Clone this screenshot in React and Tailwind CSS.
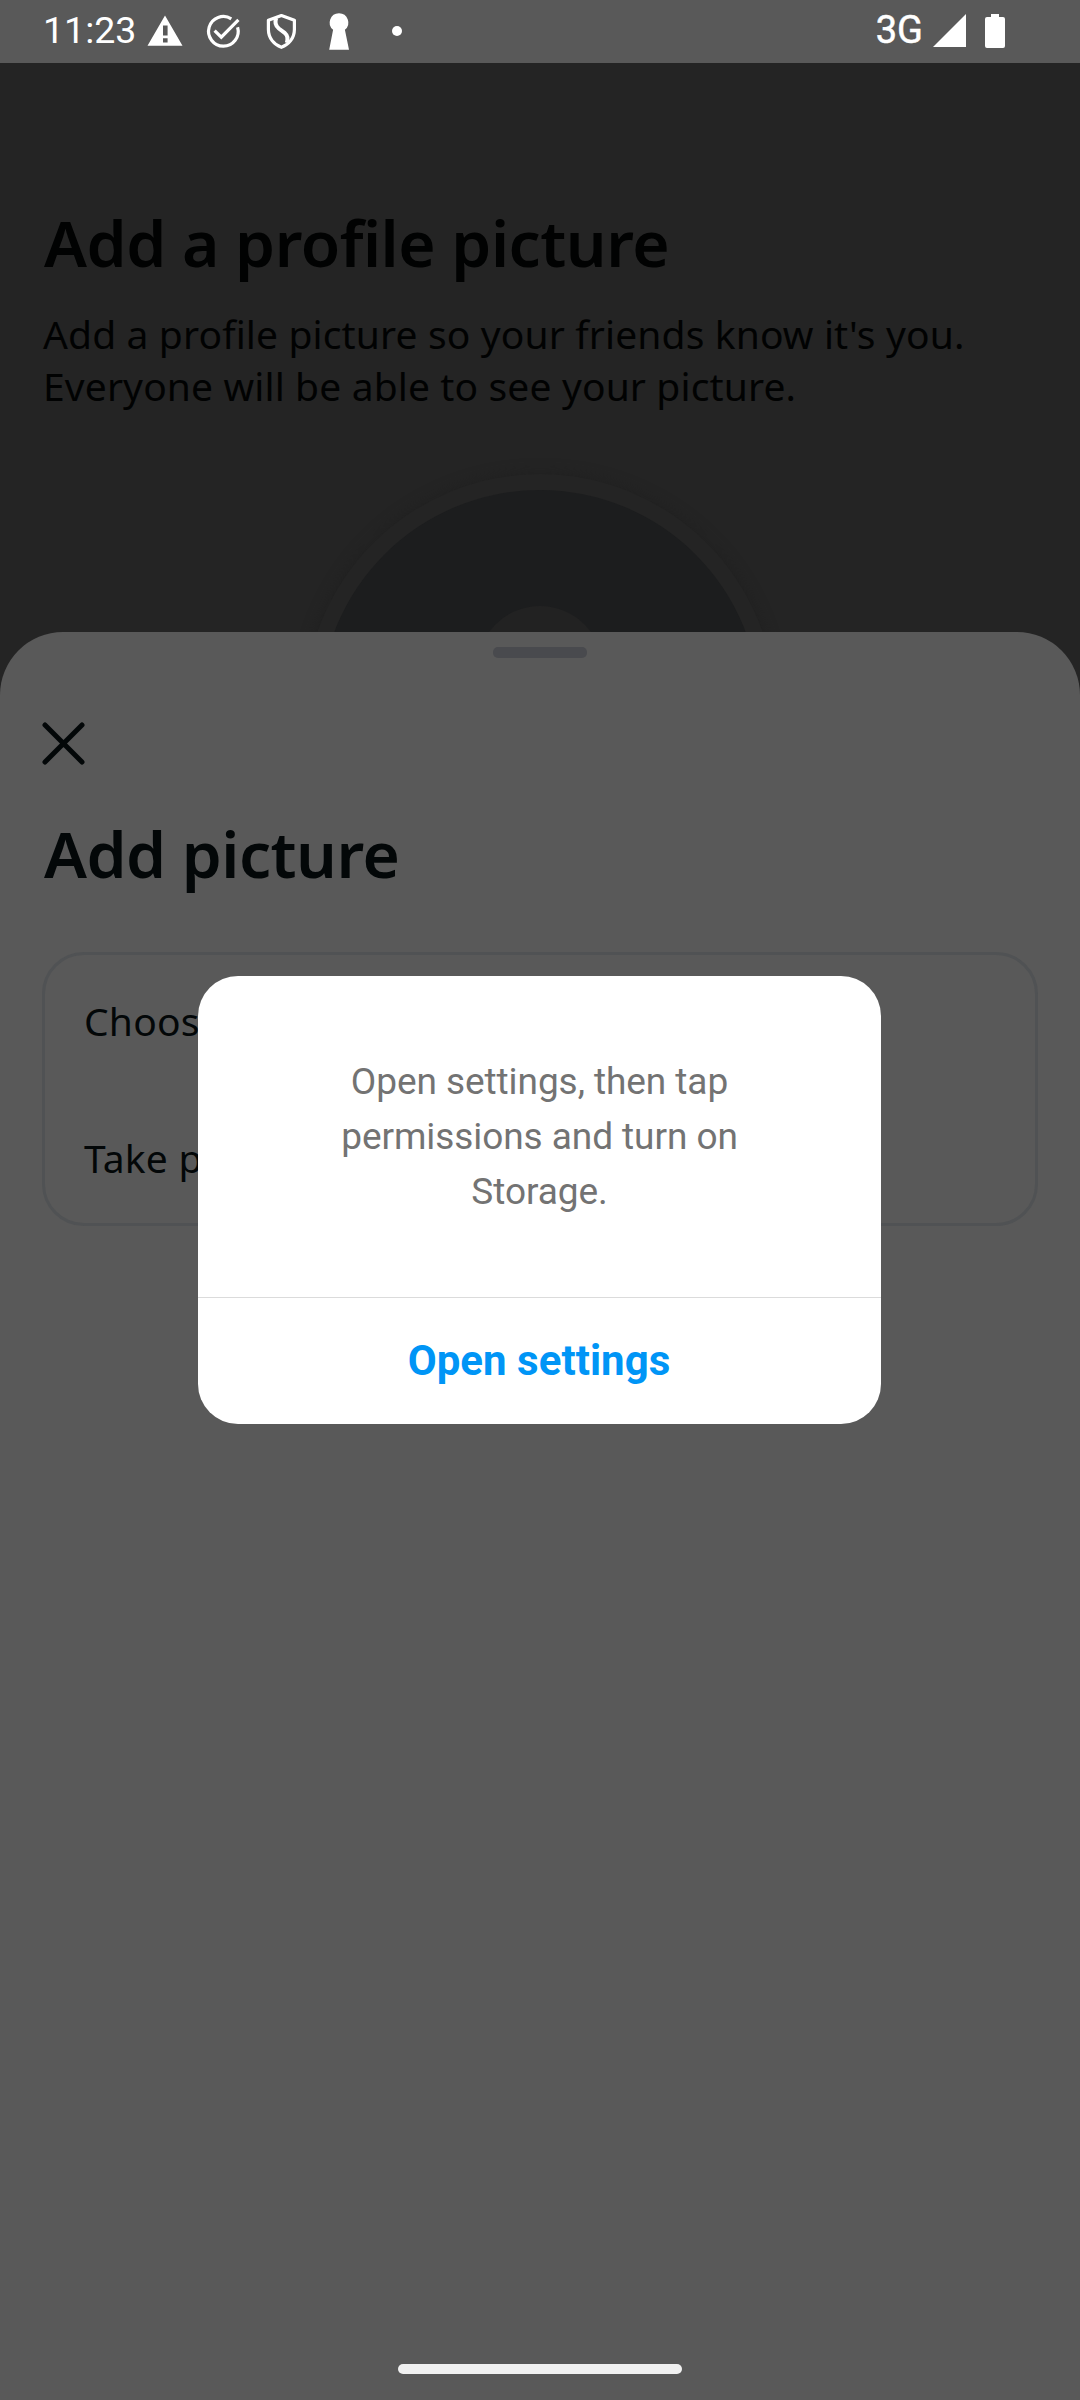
import React from 'react';

function StatusIcons() {
  return (
    <svg className="ml-[11px] h-[63px] w-[260px]" viewBox="146 0 260 63" fill="#fff">
      <path fillRule="evenodd" d="M165 15.5 182.5 45.7H147.5ZM163 25.5V35.5H167.6V25.5ZM163 38.3V42.6H167.6V38.3Z" />
      <g fill="none" stroke="#fff" strokeWidth="3.2">
        <path d="M231.3 18.8A14.8 14.8 0 1 0 237.6 27.2" />
        <path d="M214.6 30.6 221.3 37.2 238.4 19.8" />
      </g>
      <g fill="none" stroke="#fff" strokeWidth="3.2" strokeLinejoin="round">
        <path d="M281.4 15.6 294.4 20.3V29.5C294.4 38 288.8 44.7 281.4 47.3C274 44.7 268.4 38 268.4 29.5V20.3Z" />
        <path d="M276.2 18C274.6 22.4 275.4 25.8 278.8 28.5L285 33.2C287.6 35.4 288.2 38.2 286.8 42.8" strokeWidth="4" />
      </g>
      <path d="M339 13.3A9.3 9.3 0 0 1 344.9 29.8L349 49.8H329.2L333.1 29.8A9.3 9.3 0 0 1 339 13.3Z" />
      <circle cx="397" cy="31" r="5" />
    </svg>
  );
}

function SignalIcons() {
  return (
    <svg className="ml-[7px] h-[63px] w-[76px]" viewBox="930 0 76 63" fill="#fff">
      <path d="M966 14V47H933Z" />
      <path d="M991 14H999V17H1003Q1005 17 1005 19V46Q1005 48 1003 48H987Q985 48 985 46V19Q985 17 987 17H991Z" />
    </svg>
  );
}

function StatusBar() {
  return (
    <header className="flex h-[63px] items-center bg-[#595959] pr-[74px] pl-[43px] font-['Roboto',sans-serif] text-[38px] leading-[61px] text-white">
      <span className="w-[92px] pb-[2px] text-[37.5px] whitespace-nowrap">11:23</span>
      <StatusIcons />
      <span className="ml-auto pb-[2px] font-normal [-webkit-text-stroke:0.5px_white]">3G</span>
      <SignalIcons />
    </header>
  );
}

function ProfileStep() {
  return (
    <section className="h-[569px] bg-[#242424] px-[43px] pt-[140px]">
      <h1 className="pl-px text-[64px] leading-[80px] font-semibold tracking-[-0.47px] whitespace-nowrap">Add a profile picture</h1>
      <p className="mt-[25px] text-[39px] leading-[52px] tracking-[0.13px] whitespace-nowrap">
        Add a profile picture so your friends know it's you.
        <br />
        Everyone will be able to see your picture.
      </p>
      <div className="mx-auto mt-[62px] flex h-[472px] w-[472px] items-center justify-center rounded-full bg-[#242424] shadow-[0_0_14px_0_#202020]">
        <div className="h-[440px] w-[440px] rounded-full bg-[#1c1d1e] pt-[116px]">
          <div className="mx-auto h-[126px] w-[126px] rounded-full bg-[#222222]" />
        </div>
      </div>
    </section>
  );
}

function PictureSheet() {
  return (
    <section className="relative flex h-[1768px] flex-col rounded-t-[63px] bg-[#595959] px-[42px] pt-[15px]">
      <div className="mx-auto h-[11px] w-[94px] rounded-[5px] bg-[#494a4e]" />
      <svg className="mt-[64px] h-[43px] w-[43px]" viewBox="0 0 43 43" fill="none" stroke="#030708" strokeWidth="5" strokeLinecap="round">
        <path d="M3 3 40 40M40 3 3 40" />
      </svg>
      <h2 className="mt-[49px] pl-[2px] text-[64px] leading-[80px] font-semibold tracking-[-0.5px]">Add picture</h2>
      <div className="mt-[58px] flex h-[274px] w-[996px] flex-col gap-[85px] rounded-[42px] border-3 border-[#505254] pt-[40px] pl-[39px] text-[39px] leading-[52px] tracking-[0.2px]">
        <button className="text-left">Choose from camera roll</button>
        <button className="text-left">Take photo</button>
      </div>
      <div className="mx-auto mt-auto mb-[26px] h-[10px] w-[284px] rounded-full bg-[#f1f1f1]" />
    </section>
  );
}

function PermissionDialog() {
  return (
    <div className="absolute top-[976px] left-[198px] flex h-[448px] w-[683px] flex-col overflow-hidden rounded-[40px] bg-white font-['Roboto',sans-serif]">
      <p className="h-[321px] pt-[78px] text-center text-[37px] leading-[55px] tracking-[-0.07px] text-[#737373]">
        Open settings, then tap
        <br />
        permissions and turn on
        <br />
        Storage.
      </p>
      <button className="h-[127px] border-t border-[#dbdbdb] pr-px pb-[2px] text-[42px] font-bold tracking-[0.04px] text-[#0095f6]">Open settings</button>
    </div>
  );
}

export default function App() {
  return (
    <main className="relative h-[2400px] w-[1080px] overflow-hidden bg-[#242424] font-['Noto_Sans',sans-serif] text-[#030708]">
      <StatusBar />
      <div className="h-[569px] overflow-visible text-[#010202]">
        <ProfileStep />
      </div>
      <PictureSheet />
      <PermissionDialog />
    </main>
  );
}
